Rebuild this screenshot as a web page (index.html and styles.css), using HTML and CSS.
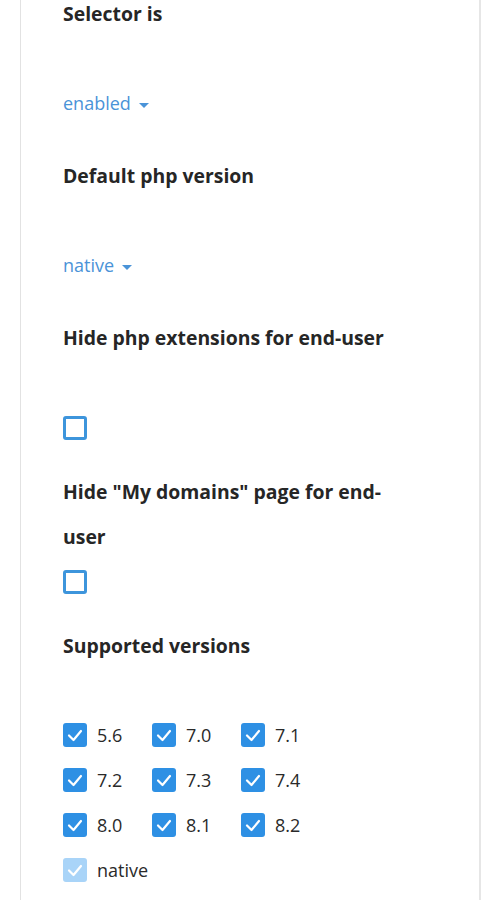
FILE: index.html
```html
<!DOCTYPE html>
<html lang="en">
<head>
  <meta charset="UTF-8">
  <meta name="viewport" content="width=device-width, initial-scale=1.0">
  <title>PHP Selector settings</title>
  <link rel="stylesheet" href="styles.css">
</head>
<body>
  <div class="card">
    <div class="field">
      <div class="label">Selector is</div>
      <div class="value"><span class="dropdown">enabled <span class="caret"></span></span></div>
    </div>

    <div class="field">
      <div class="label">Default php version</div>
      <div class="value"><span class="dropdown">native <span class="caret"></span></span></div>
    </div>

    <div class="field">
      <div class="label">Hide php extensions for end-user</div>
      <div class="check-row"><span class="box"></span></div>
    </div>

    <div class="field">
      <div class="label">Hide "My domains" page for end-user</div>
      <div class="check-row"><span class="box"></span></div>
    </div>

    <div class="field">
      <div class="label">Supported versions</div>
      <div class="versions">
        <label class="version"><span class="box checked"><svg viewBox="0 0 24 24"><polyline points="6,12.5 10.5,17 18,8"/></svg></span>5.6</label>
        <label class="version"><span class="box checked"><svg viewBox="0 0 24 24"><polyline points="6,12.5 10.5,17 18,8"/></svg></span>7.0</label>
        <label class="version"><span class="box checked"><svg viewBox="0 0 24 24"><polyline points="6,12.5 10.5,17 18,8"/></svg></span>7.1</label>
        <label class="version"><span class="box checked"><svg viewBox="0 0 24 24"><polyline points="6,12.5 10.5,17 18,8"/></svg></span>7.2</label>
        <label class="version"><span class="box checked"><svg viewBox="0 0 24 24"><polyline points="6,12.5 10.5,17 18,8"/></svg></span>7.3</label>
        <label class="version"><span class="box checked"><svg viewBox="0 0 24 24"><polyline points="6,12.5 10.5,17 18,8"/></svg></span>7.4</label>
        <label class="version"><span class="box checked"><svg viewBox="0 0 24 24"><polyline points="6,12.5 10.5,17 18,8"/></svg></span>8.0</label>
        <label class="version"><span class="box checked"><svg viewBox="0 0 24 24"><polyline points="6,12.5 10.5,17 18,8"/></svg></span>8.1</label>
        <label class="version"><span class="box checked"><svg viewBox="0 0 24 24"><polyline points="6,12.5 10.5,17 18,8"/></svg></span>8.2</label>
        <label class="version"><span class="box checked disabled"><svg viewBox="0 0 24 24"><polyline points="6,12.5 10.5,17 18,8"/></svg></span>native</label>
      </div>
    </div>
  </div>
</body>
</html>
```

FILE: styles.css
```css
body {
  margin: 0;
  font-family: "Open Sans", "Noto Sans", sans-serif;
  background: #fff;
  color: #2a2a2a;
}

.card {
  margin: -9px 20px 0;
  padding: 0 42px 40px;
  min-height: 960px;
  border-left: 1px solid #e2e2e2;
  border-right: 2px solid #e6e6e6;
}

.field {
  margin-bottom: 27px;
}

.label {
  max-width: 345px;
  min-height: 90px;
  font-size: 19.4px;
  font-weight: 700;
  line-height: 45px;
  color: #262626;
}

.value {
  height: 45px;
  line-height: 45px;
  font-size: 18px;
}

.dropdown {
  color: #4a93d8;
  cursor: pointer;
}

.caret {
  display: inline-block;
  width: 0;
  height: 0;
  margin-left: 3px;
  vertical-align: middle;
  border-left: 5px solid transparent;
  border-right: 5px solid transparent;
  border-top: 5px solid #4a93d8;
}

.check-row {
  height: 37px;
  padding-top: 10px;
  box-sizing: border-box;
}

.field + .field .label + .check-row {
  padding-top: 11px;
}

.box {
  display: inline-block;
  box-sizing: border-box;
  width: 24px;
  height: 24px;
  border: 3px solid #3d95dc;
  border-radius: 3px;
  vertical-align: top;
}

.box.checked {
  border: none;
  background: #2e90e4;
}

.box.disabled {
  background: #a9d4f8;
}

.box svg {
  display: block;
  width: 24px;
  height: 24px;
  fill: none;
  stroke: #fff;
  stroke-width: 2.2;
  stroke-linecap: round;
  stroke-linejoin: round;
}

.versions {
  display: grid;
  grid-template-columns: repeat(3, 89px);
  grid-auto-rows: 45px;
  margin-top: -1px;
}

.version {
  display: flex;
  align-items: center;
  gap: 10px;
  font-size: 18px;
  color: #2a2a2a;
}
```
